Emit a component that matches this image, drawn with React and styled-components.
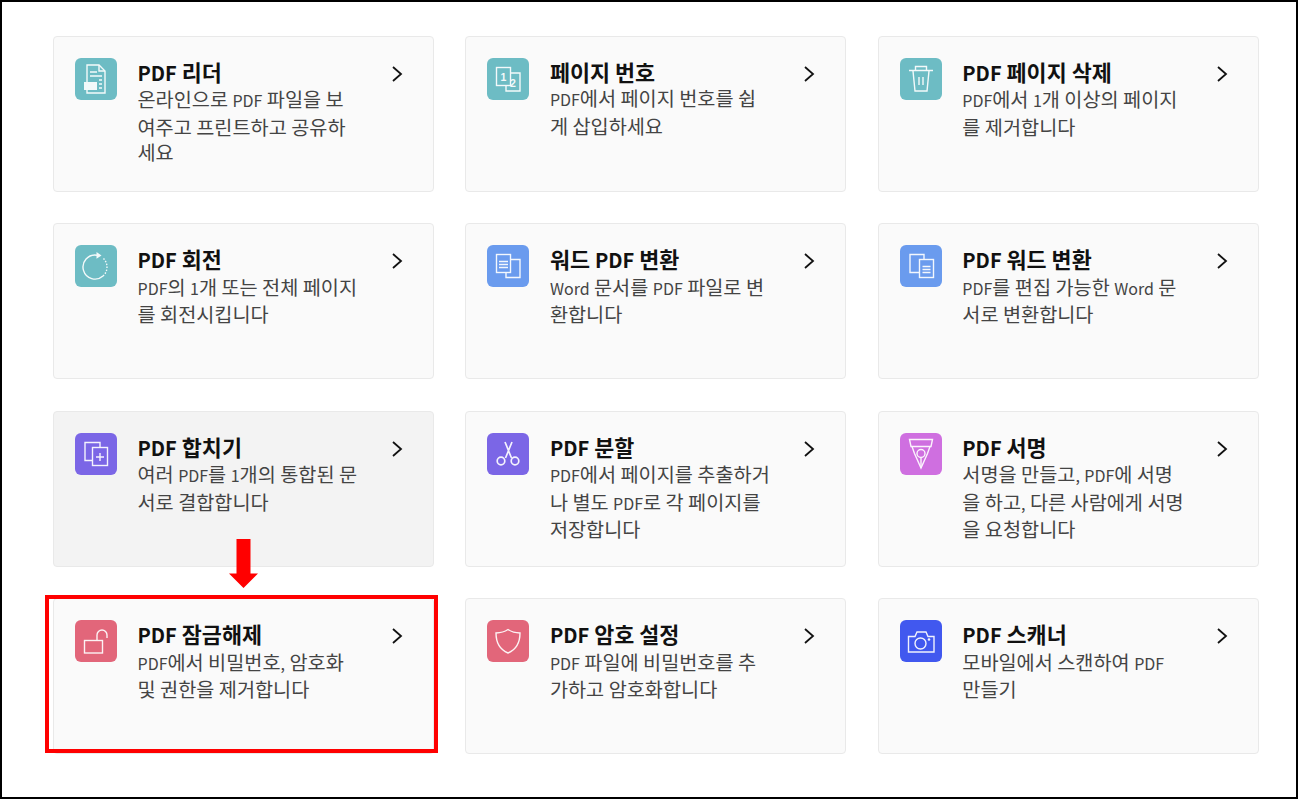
import React from "react";
import styled, { createGlobalStyle } from "styled-components";

const GlobalStyle = createGlobalStyle`
  html, body {
    margin: 0;
    padding: 0;
    background: #fff;
  }
  body {
    font-family: "Noto Sans CJK KR", "Noto Sans", sans-serif;
  }
`;

const Frame = styled.div`
  box-sizing: border-box;
  width: 1298px;
  height: 799px;
  border: 2px solid #000;
  padding: 33.9px 37px 0 51px;
  background: #fff;
  overflow: hidden;
`;

const Grid = styled.div`
  display: grid;
  grid-template-columns: repeat(3, 381px);
  grid-auto-rows: 156px;
  column-gap: 31.4px;
  row-gap: 31.5px;
`;

const Card = styled.div`
  position: relative;
  box-sizing: border-box;
  display: flex;
  padding: 21.1px 0 0 21px;
  background: ${(p) => (p.$hover ? "#f3f3f3" : "#fafafa")};
  border: 1px solid #e9e9e9;
  border-radius: 4px;
`;

const IconBox = styled.div`
  flex: none;
  width: 42px;
  height: 42px;
  border-radius: 6px;
  background: ${(p) => p.$color};
`;

const Body = styled.div`
  margin-left: 20.5px;
  width: 233px;
`;

const Title = styled.div`
  font-size: 21.8px;
  line-height: 28px;
  font-weight: 700;
  color: #111;
  white-space: nowrap;
`;

const Desc = styled.div`
  margin-top: -0.7px;
  font-size: 19.7px;
  line-height: 25.4px;
  font-weight: 400;
  color: #444;
`;

const Line = styled.div`
  white-space: nowrap;
`;

// latin runs sit smaller than the hangul around them
const Latin = styled.span`
  font-size: ${(p) => p.$size}px;
`;

const Chevron = styled.svg`
  flex: none;
  margin: 7px 0 0 19.5px;
  width: 14px;
  height: 18px;
`;

const Highlight = styled.div`
  position: absolute;
  left: -9px;
  top: -4px;
  width: 393px;
  height: 158px;
  box-sizing: border-box;
  border: 4px solid #f00;
  pointer-events: none;
`;

const Arrow = styled.svg`
  position: absolute;
  left: 175px;
  top: -60px;
  width: 29px;
  height: 49px;
`;

const Glyph = styled.svg`
  display: block;
  width: 42px;
  height: 42px;
  fill: none;
  stroke: #fff;
  stroke-width: ${(p) => p.$weight || 1.4};
  opacity: 0.92;
`;

const Digit = styled.text`
  font-family: "Liberation Sans", sans-serif;
  font-size: 10.5px;
  font-weight: 700;
  fill: #fff;
  stroke: none;
`;

function Mixed({ text, size }) {
  const parts = text.split(/([A-Za-z0-9,]+)/);
  return parts.map((part, i) =>
    i % 2 === 1 ? (
      <Latin key={i} $size={size}>
        {part}
      </Latin>
    ) : (
      part
    )
  );
}

const ReaderIcon = () => (
  <Glyph viewBox="0 0 42 42">
    <path d="M12 24V7h12l6 6v22H12v-3" />
    <path d="M24 7v6h6" />
    <path d="M15 14h7M15 18h12M24 22h3M24 26h3M24 30h3" />
    <rect x="9" y="24" width="13" height="8" fill="#fff" stroke="none" />
  </Glyph>
);

const NumberIcon = () => (
  <Glyph viewBox="0 0 42 42">
    <rect x="9.500" y="9.500" width="14" height="18" />
    <path d="M24 15h9v18H19v-5" />
    <Digit x="13.500" y="22.500">1</Digit>
    <Digit x="23" y="29">2</Digit>
  </Glyph>
);

const TrashIcon = () => (
  <Glyph viewBox="0 0 42 42">
    <path d="M9 12.500h24M15.500 12V8.500h11V12" />
    <path d="M13 13l2 20h12l2-20" />
    <path d="M19 19v8M23 19v8" />
  </Glyph>
);

const RotateIcon = () => (
  <Glyph viewBox="0 0 42 42">
    <path d="M22 10.200A12 12 0 1 0 28 31" />
    <path d="M28 31A12 12 0 0 0 32 22A12 12 0 0 0 28.500 13.500" strokeDasharray="1.500 1.500" />
    <path d="M21.500 7l5 3.400-5 3.400z" fill="#fff" stroke="none" />
  </Glyph>
);

const WordToPdfIcon = () => (
  <Glyph viewBox="0 0 42 42">
    <rect x="9.500" y="9.500" width="14" height="18" />
    <path d="M24 14.500h9v18H19V28" />
    <path d="M12 16.500h9M12 19.500h9M12 22.500h9" />
  </Glyph>
);

const PdfToWordIcon = () => (
  <Glyph viewBox="0 0 42 42">
    <path d="M19 27.500h-9v-18h14v5" />
    <rect x="19.500" y="14.500" width="14" height="18" />
    <path d="M22.500 21.500h8M22.500 24.500h8M22.500 27.500h8" />
  </Glyph>
);

const MergeIcon = () => (
  <Glyph viewBox="0 0 42 42">
    <path d="M17 27.500h-7v-18h15v5" />
    <rect x="17.500" y="14.500" width="15" height="18" />
    <path d="M25 20v8M21 24h8" />
  </Glyph>
);

const ScissorsIcon = () => (
  <Glyph viewBox="0 0 42 42" $weight={1.7}>
    <circle cx="14" cy="28" r="3.800" />
    <circle cx="28" cy="28" r="3.800" />
    <path d="M18 9l6.500 16M25 9l-6.500 16" />
  </Glyph>
);

const PenIcon = () => (
  <Glyph viewBox="0 0 42 42">
    <path d="M9.500 6.500h23l-1.500 7H11z" />
    <path d="M12 13.500l2.500 7L21 35l6.500-14.500 2.500-7" />
    <circle cx="21" cy="20.500" r="4" />
    <path d="M21 24.500V35" />
  </Glyph>
);

const UnlockIcon = () => (
  <Glyph viewBox="0 0 42 42">
    <rect x="9.500" y="20.500" width="18" height="12.500" />
    <path d="M22 20v-5a5 5 0 0 1 10 0v3" />
  </Glyph>
);

const ShieldIcon = () => (
  <Glyph viewBox="0 0 42 42">
    <path d="M21 9.500c3 2 7 3.300 12 3.500 0 9-2.500 16-12 20-9.500-4-12-11-12-20 5-.2 9-1.500 12-3.500z" />
  </Glyph>
);

const CameraIcon = () => (
  <Glyph viewBox="0 0 42 42">
    <path d="M8.500 16.500h6.500l2-4.500h9l2 4.500h6v15.500H8.500z" />
    <circle cx="20.500" cy="23.500" r="5.500" />
    <circle cx="29" cy="19.500" r="1.300" fill="#fff" stroke="none" />
  </Glyph>
);

const tools = [
  { title: "PDF 리더", lines: ["온라인으로 PDF 파일을 보", "여주고 프린트하고 공유하", "세요"], color: "#6dbcc4", Icon: ReaderIcon },
  { title: "페이지 번호", lines: ["PDF에서 페이지 번호를 쉽", "게 삽입하세요"], color: "#6dbcc4", Icon: NumberIcon },
  { title: "PDF 페이지 삭제", lines: ["PDF에서 1개 이상의 페이지", "를 제거합니다"], color: "#6dbcc4", Icon: TrashIcon },
  { title: "PDF 회전", lines: ["PDF의 1개 또는 전체 페이지", "를 회전시킵니다"], color: "#6dbcc4", Icon: RotateIcon },
  { title: "워드 PDF 변환", lines: ["Word 문서를 PDF 파일로 변", "환합니다"], color: "#6a9bee", Icon: WordToPdfIcon },
  { title: "PDF 워드 변환", lines: ["PDF를 편집 가능한 Word 문", "서로 변환합니다"], color: "#6a9bee", Icon: PdfToWordIcon },
  { title: "PDF 합치기", lines: ["여러 PDF를 1개의 통합된 문", "서로 결합합니다"], color: "#7b66e6", Icon: MergeIcon, hover: true },
  { title: "PDF 분할", lines: ["PDF에서 페이지를 추출하거", "나 별도 PDF로 각 페이지를", "저장합니다"], color: "#7b66e6", Icon: ScissorsIcon },
  { title: "PDF 서명", lines: ["서명을 만들고, PDF에 서명", "을 하고, 다른 사람에게 서명", "을 요청합니다"], color: "#cf6fe0", Icon: PenIcon },
  { title: "PDF 잠금해제", lines: ["PDF에서 비밀번호, 암호화", "및 권한을 제거합니다"], color: "#e2667a", Icon: UnlockIcon, marked: true },
  { title: "PDF 암호 설정", lines: ["PDF 파일에 비밀번호를 추", "가하고 암호화합니다"], color: "#e2667a", Icon: ShieldIcon },
  { title: "PDF 스캐너", lines: ["모바일에서 스캔하여 PDF", "만들기"], color: "#4158ef", Icon: CameraIcon },
];

function ToolCard({ tool }) {
  const { title, lines, color, Icon, hover, marked } = tool;
  return (
    <Card $hover={hover}>
      <IconBox $color={color}>
        <Icon />
      </IconBox>
      <Body>
        <Title>
          <Mixed text={title} size={20} />
        </Title>
        <Desc>
          {lines.map((line) => (
            <Line key={line}>
              <Mixed text={line} size={16} />
            </Line>
          ))}
        </Desc>
      </Body>
      <Chevron viewBox="0 0 14 18" fill="none" stroke="#111" strokeWidth="1.8">
        <path d="M3 2l8 7-8 7" />
      </Chevron>
      {marked && (
        <>
          <Arrow viewBox="0 0 29 49">
            <path d="M7.500 0h14v34.500H29L14.500 49 0 34.500h7.500z" fill="#f00" />
          </Arrow>
          <Highlight />
        </>
      )}
    </Card>
  );
}

function App() {
  return (
    <>
      <GlobalStyle />
      <Frame>
        <Grid>
          {tools.map((tool) => (
            <ToolCard key={tool.title} tool={tool} />
          ))}
        </Grid>
      </Frame>
    </>
  );
}

export default App;
